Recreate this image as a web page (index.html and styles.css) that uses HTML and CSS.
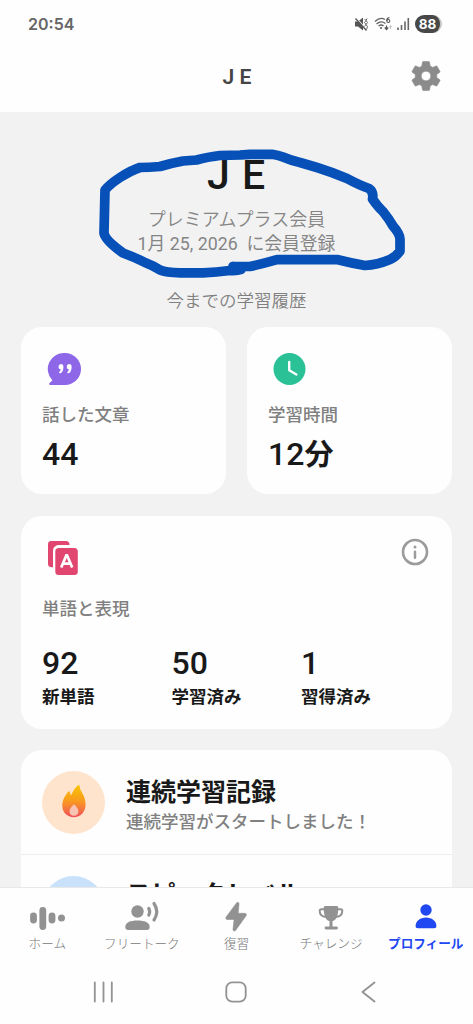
FILE: index.html
```html
<!DOCTYPE html>
<html lang="ja">
<head>
<meta charset="utf-8">
<meta name="viewport" content="width=device-width">
<title>JE</title>
<link rel="stylesheet" href="styles.css">
</head>
<body>
<div class="app">
  <div class="status">
    <span class="clock">20:54</span>
    <svg class="status-icons" width="60" height="18" viewBox="355 15 60 18">
      <path d="M355 21.500h3l5-4v13l-5-4h-3z" fill="#555"/>
      <path d="M355.500 17.500l11 12" stroke="#fff" stroke-width="1.500"/>
      <path d="M355.500 18.500l11 12" stroke="#555" stroke-width="1.300"/>
      <path d="M364.500 19l1.500 1.500-1.500 2 1.500 2-1.500 2M367 18.500l-1 2 1.500 2-1.500 2 1.500 2-1 3" fill="none" stroke="#666" stroke-width="1"/>
      <path d="M375 21.500q5-5 10-2M376.500 24q4.500-4 9-.5M378.500 26q3-2 5 0" fill="none" stroke="#666" stroke-width="1.400"/>
      <circle cx="381" cy="28" r="1" fill="#555"/>
      <path d="M389.500 17.500q-3 .5-2.800 3.500" fill="none" stroke="#555" stroke-width="1.100"/>
      <circle cx="388.300" cy="21" r="1.500" fill="none" stroke="#555" stroke-width="1.100"/>
      <path d="M386.500 25.500v3.500m-1.700-1.500l1.700 2 1.700-2" fill="none" stroke="#555" stroke-width="1.200"/>
      <path d="M390.500 29v-3m-1 1l1-1.500 1 1.500" fill="none" stroke="#bbb"/>
      <path d="M398 27.500V30M401.500 25v5M405 21.500V30M408.300 18v12" stroke="#666" stroke-width="1.600"/>
    </svg>
    <span class="battery">88</span>
  </div>
  <header class="topbar">
    <span class="topbar-title">J E</span>
    <svg class="gear" width="36" height="36" viewBox="0 0 24 24"><path fill="#8b8b8b" stroke="#8b8b8b" stroke-width=".4" stroke-linejoin="round" d="M19.140 12.940c.04-.3.060-.61.060-.94s-.02-.64-.07-.94l2.030-1.580a.49.49 0 0 0 .12-.61l-1.920-3.320a.49.49 0 0 0-.59-.22l-2.390.96a7 7 0 0 0-1.620-.94l-.36-2.540A.48.48 0 0 0 13.920 2.400h-3.840a.48.48 0 0 0-.47.410l-.36 2.540c-.59.24-1.130.57-1.620.94l-2.390-.96a.48.48 0 0 0-.59.22L2.740 8.870a.48.48 0 0 0 .12.610l2.030 1.580a7 7 0 0 0 0 1.880l-2.030 1.580a.49.49 0 0 0-.12.610l1.920 3.320c.12.220.37.290.59.220l2.390-.96c.5.380 1.030.7 1.620.94l.36 2.540c.05.240.24.410.48.410h3.840c.24 0 .44-.17.470-.41l.36-2.540a7 7 0 0 0 1.620-.94l2.390.96c.22.080.47 0 .59-.22l1.920-3.320a.48.48 0 0 0-.12-.61zM12 15.200a3.200 3.200 0 1 1 0-6.400 3.200 3.200 0 0 1 0 6.400z"/></svg>
  </header>
  <main class="content">
    <section class="member">
      <h1 class="name">J E</h1>
      <p class="plan">プレミアムプラス会員</p>
      <p class="joined">1月 25, 2026&nbsp; に会員登録</p>
      <svg class="scribble" width="473" height="200" viewBox="0 112 473 200"><path d="M233 266.500L241 269.500Q237 271 230 270.500Q216 272.500 203 272.800H180Q166 272.500 160 270Q154 266 145 262.500Q134 257 123 253Q105 240 104 233L105 190Q110 184 120 177.500Q132 170 140 167.500Q149 167.500 160 166.500Q172 163 183 161L196.500 160Q210 156.500 220 155.500L240 155L250 154.300H272Q278 155 283 157Q291 160.500 300 162.500L317 167.500Q333 172.500 347 178.500Q359 185 369 188.500Q374 192 372.500 199Q378 207 383 211.500Q389 219 393 226Q400 234 400 239V251Q396 257 390 259.500Q377 265 365 265.500Q351 263 338 259.700H277Q262 264 250 266.500H233" fill="none" stroke="#0650b8" stroke-width="9.700" stroke-linejoin="round" stroke-linecap="round"/></svg>
    </section>
    <h2 class="history">今までの学習履歴</h2>
    <div class="stats">
      <section class="card stat">
        <svg width="34" height="34" viewBox="-1 0 34 34"><path d="M17 1a16 16 0 1 1 0 32H2.200c-1.200 0-1.600-1-.8-1.800l3-3A16 16 0 0 1 17 1z" fill="#8e67e8"/><path d="M12.700 12.100a2.700 2.700 0 0 1 2.700 2.900c0 3.500-1.500 6.300-3.500 6.300-1 0-1.200-.8-.5-1.500.8-.6 1.300-1.300 1.400-2.200a2.800 2.800 0 0 1-.1-5.500zM20.900 12.100a2.700 2.700 0 0 1 2.700 2.900c0 3.500-1.500 6.300-3.500 6.300-1 0-1.200-.8-.5-1.500.8-.6 1.300-1.300 1.400-2.200a2.800 2.800 0 0 1-.1-5.500z" fill="#fff"/></svg>
        <h3 class="label">話した文章</h3>
        <p class="value">44</p>
      </section>
      <section class="card stat">
        <svg width="34" height="34" viewBox="0 0 34 34"><circle cx="16.500" cy="17" r="16" fill="#2bc196"/><path d="M16.200 10v8.300l7.200 4.200" fill="none" stroke="#fff" stroke-width="2.400" stroke-linecap="round" stroke-linejoin="round"/></svg>
        <h3 class="label">学習時間</h3>
        <p class="value">12<span class="unit">分</span></p>
      </section>
    </div>
    <section class="card words">
      <div class="words-top">
        <svg width="32" height="36" viewBox="0 0 32 36"><path d="M4 1h15c2 0 3.500 1.400 3.500 3.300V5H12C8.500 5 6 7.500 6 11v16.300H4.500c-2 0-3.500-1.300-3.500-3.300V4c0-1.700 1.300-3 3-3z" fill="#e14670"/><rect x="8.300" y="8" width="22.500" height="27" rx="3.500" fill="#e14670"/><path d="M14.200 27.500l5.500-13 5.500 13M16.300 23.700h6.800" fill="none" stroke="#fff" stroke-width="2.700" stroke-linejoin="bevel"/></svg>
        <svg class="info" width="28" height="28" viewBox="0 0 28 28"><circle cx="14" cy="14" r="12" fill="none" stroke="#9b9b9b" stroke-width="2.600"/><circle cx="14" cy="9" r="1.500" fill="#9b9b9b"/><path d="M14 13.700v6" stroke="#9b9b9b" stroke-width="2.500" stroke-linecap="round"/></svg>
      </div>
      <h3 class="label">単語と表現</h3>
      <div class="counts">
        <div><p class="value">92</p><p class="caption">新単語</p></div>
        <div><p class="value">50</p><p class="caption">学習済み</p></div>
        <div><p class="value">1</p><p class="caption">習得済み</p></div>
      </div>
    </section>
    <section class="card records">
      <div class="record">
        <div class="badge flame"><svg width="26" height="34" viewBox="0 0 26 34">
          <defs><linearGradient id="fire" x1="0" y1="0" x2="0" y2="1"><stop offset="0" stop-color="#f8c400"/><stop offset=".5" stop-color="#f89a20"/><stop offset="1" stop-color="#f1505c"/></linearGradient></defs>
          <path d="M17.200 1.300c.8-.7 1.400-.2 1.400.8 0 5 6 9.200 6 18.400 0 7.500-5.200 12.700-11.800 12.700S1.300 28.500 1.300 21.500c0-6.500 3.200-10.200 6-13.800.6-.7 1.300-.5 1.500.3l.6 2.200c.2.700.8.800 1.200.2 1.800-4 3.900-7 6.600-9.100z" fill="url(#fire)"/><path d="M13 20.200c2.500 2.500 4.400 4.300 4.400 7.400 0 2.500-1.800 4.200-4.400 4.200s-4.500-1.800-4.500-4.200c0-3.100 2-4.900 4.500-7.400z" fill="#f9c3b4"/></svg></div>
        <div><h3 class="record-title">連続学習記録</h3><p class="record-text">連続学習がスタートしました！</p></div>
      </div>
      <div class="record">
        <div class="badge level"></div>
        <div><h3 class="record-title kana">スピークレベル</h3></div>
      </div>
    </section>
  </main>
  <nav class="tabs">
    <a class="tab"><svg width="40" height="34" viewBox="0 0 40 34"><path d="M6.500 16v4M15.800 10.500v16M25 16v4" stroke="#929292" stroke-width="6.800" stroke-linecap="round"/><circle cx="34.500" cy="18" r="3.500" fill="#929292"/></svg>ホーム</a>
    <a class="tab"><svg width="40" height="34" viewBox="0 0 40 34"><circle cx="15.500" cy="11.500" r="6.200" fill="#929292"/><path d="M3.300 27c0-4.500 5-6.500 12.200-6.500S27.700 22.500 27.700 27c0 2-1 3-3 3H6.300c-2 0-3-1-3-3z" fill="#929292"/><path d="M26.800 8.500q1.700 3.300 0 6.500M32 3.500q5.500 8.200 0 16.500" fill="none" stroke="#929292" stroke-width="3.200" stroke-linecap="round"/></svg>フリートーク</a>
    <a class="tab"><svg width="40" height="34" viewBox="0 0 40 34"><path d="M20.500 3c.8-1.200 2.700-.6 2.500 1l-.8 9.300h6.500c1.500 0 2.200 1.300 1.400 2.400L19.700 30.300c-1 1.300-3 .6-2.700-1.100l1.100-9.700h-6.400c-1.600 0-2.400-1.300-1.500-2.600z" fill="#929292" stroke="#929292" stroke-width=".6"/></svg>復習</a>
    <a class="tab"><svg width="40" height="34" viewBox="0 0 40 34"><path d="M14.500 6h11c1 0 1.800.7 1.800 1.600 0 7.400-1.700 13.900-7.300 13.900S12.700 15 12.700 7.600c0-.9.800-1.600 1.800-1.600zM18.500 20h3v7h-3z" fill="#929292"/><path d="M13.500 9.300h-3.300c-1 0-1.500.5-1.500 1.500 0 3.500 2.300 5.800 6.300 6.200M26.500 9.300h3.300c1 0 1.500.5 1.500 1.500 0 3.500-2.300 5.800-6.300 6.200" fill="none" stroke="#929292" stroke-width="2"/><path d="M15 28h10.500" stroke="#929292" stroke-width="2.800" stroke-linecap="round"/></svg>チャレンジ</a>
    <a class="tab active"><svg width="40" height="34" viewBox="0 0 40 34"><circle cx="20" cy="10" r="5.700" fill="#1f48f2"/><path d="M9.600 26c0-5 4.600-8.500 10.400-8.500S30.400 21 30.400 26c0 1.500-.8 2.200-2.400 2.200H12c-1.600 0-2.400-.7-2.400-2.200z" fill="#1f48f2"/></svg>プロフィール</a>
  </nav>
  <footer class="system">
    <svg width="22" height="22" viewBox="0 0 22 22"><path d="M1.800 1.500v19M10.500 1.500v19M18.800 1.500v19"/></svg>
    <svg width="22" height="22" viewBox="0 0 22 22"><rect x="1.300" y="1.300" width="19.400" height="19.400" rx="6"/></svg>
    <svg width="22" height="22" viewBox="0 0 22 22"><path d="M16.500 1.500L4.500 11l12 9.500"/></svg>
  </footer>
</div>
</body>
</html>
```
FILE: styles.css
```css
* { box-sizing: border-box; }
body, h1, h2, h3, p { margin: 0; }
body {
  background: #fefefe;
  font-family: Roboto, "Noto Sans CJK JP", sans-serif;
  color: #191919;
}
svg { display: block; flex: none; }
.app { display: flex; flex-direction: column; width: 473px; height: 1024px; overflow: hidden; }
.status { display: flex; align-items: center; height: 46px; padding: 2px 31px 0 28px; color: #666; }
.clock { flex: 1; font-family: Inter, sans-serif; font-size: 16px; font-weight: 600; }
.battery {
  width: 27px; height: 18px; border-radius: 9px; border-right: 2px solid #c8c8c8;
  background: #484848; color: #fff; font: 700 13.500px/18px Inter, sans-serif; text-align: center;
}
.topbar { display: flex; align-items: center; justify-content: flex-end; height: 66px; padding: 0 29px 6px 0; }
.topbar-title { flex: 1; padding: 1px 0 0 66px; text-align: center; font-size: 21px; font-weight: 600; line-height: 24px; color: #444; }
.content { flex: 1; min-height: 0; overflow: hidden; padding: 0 21px; background: #f2f2f2; }
.member { position: relative; padding-top: 39px; text-align: center; }
.name { height: 50px; font-size: 41px; font-weight: 500; line-height: 48px; letter-spacing: 1px; }
.plan, .joined { height: 24px; line-height: 24px; font-size: 18px; color: #858585; white-space: nowrap; }
.plan { margin-top: 7px; font-weight: 350; }
.joined { font-weight: 400; font-size: 17.800px; }
.scribble { position: absolute; top: 0; left: -21px; }
.history { margin-top: 31px; height: 28px; font-size: 17.500px; font-weight: 350; line-height: 28px; text-align: center; color: #808080; }
.stats { display: grid; grid-template-columns: 1fr 1fr; gap: 21px; margin-top: 12px; }
.card { background: #fefefe; border-radius: 21px; }
.stat { height: 167px; padding: 25px 21px; }
.stat svg { margin-left: 5px; }
.label { margin-top: 16px; font-size: 17.500px; font-weight: 500; line-height: 26px; color: #808080; }
.value { font-size: 32px; font-weight: 500; line-height: 38px; }
.stat .value { margin-top: 7px; }
.unit { display: inline-block; font-size: 29px; font-weight: 700; line-height: 30px; }
.words { height: 213px; margin-top: 21.500px; padding: 24px 21px; }
.words-top { display: flex; justify-content: space-between; align-items: flex-start; padding: 0 2px 0 5px; }
.info { margin-top: -1.500px; }
.words .label { margin-top: 20px; }
.counts { display: grid; grid-template-columns: repeat(3, 129.500px); margin-top: 22px; }
.caption { font-size: 17.500px; font-weight: 700; line-height: 28px; padding-top: 1px; }
.records { height: 220px; margin-top: 21.500px; }
.record { display: flex; align-items: flex-start; gap: 21px; height: 105px; padding: 21px; border-bottom: 1px solid #eee; }
.badge { display: flex; justify-content: center; align-items: center; width: 63px; height: 63px; border-radius: 50%; }
.badge svg { margin-top: -3px; }
.flame { background: #ffe4cd; }
.level { background: #cae1fb; }
.record-title { font-size: 25px; font-weight: 700; line-height: 38px; margin-top: 3px; }
.kana { margin-top: 0; }
.record-text { font-size: 17.500px; font-weight: 500; line-height: 24px; margin-top: -2px; color: #808080; white-space: nowrap; }
.tabs { display: grid; grid-template-columns: repeat(5, 1fr); height: 73px; padding-top: 12px; border-top: 1px solid #e8e8e8; }
.tab { display: flex; flex-direction: column; align-items: center; font-size: 12.600px; font-weight: 300; line-height: 19px; color: #777; white-space: nowrap; }
.active { color: #1f48f2; font-weight: 700; }
.system { display: grid; grid-template-columns: repeat(3, 132.500px); justify-content: center; justify-items: center; height: 64px; padding: 21px 1px 0 0; }
.system svg { fill: none; stroke: #929292; stroke-width: 1.800; stroke-linecap: round; stroke-linejoin: round; }
```
